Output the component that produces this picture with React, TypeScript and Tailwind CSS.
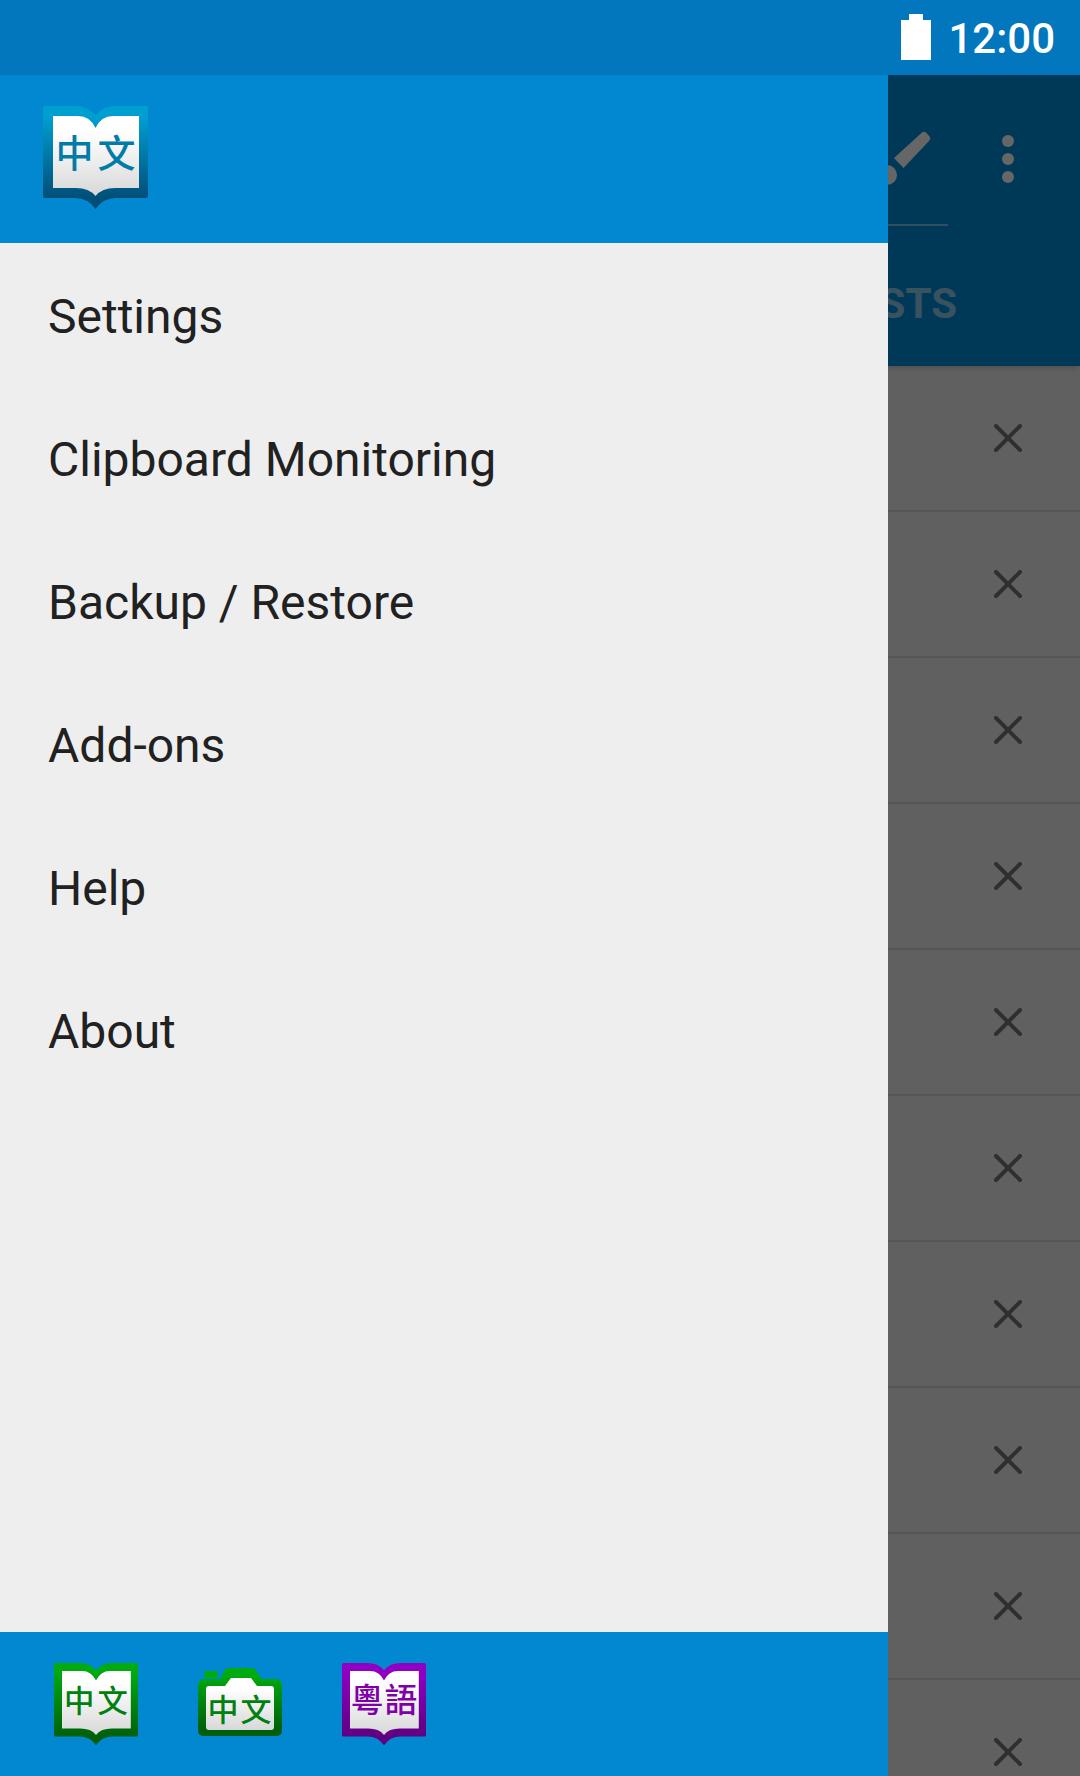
const menuItems = ["Settings", "Clipboard Monitoring", "Backup / Restore", "Add-ons", "Help", "About"];
const rows = Array.from({ length: 10 }, (_, i) => i);

type Tone = { id: string; top: string; bottom: string; text: string };

const blue: Tone = { id: "logoBlue", top: "#009fd2", bottom: "#004e78", text: "#017ca8" };
const green: Tone = { id: "logoGreen", top: "#00ab12", bottom: "#005f0a", text: "#008010" };
const purple: Tone = { id: "logoPurple", top: "#9000c4", bottom: "#5f0080", text: "#8000a8" };

function Gradients({ tone }: { tone: Tone }) {
  return (
    <defs>
      <linearGradient id={tone.id} x1="0" y1="0" x2="0" y2="1">
        <stop offset="0.1" stopColor={tone.top} />
        <stop offset="0.9" stopColor={tone.bottom} />
      </linearGradient>
      <linearGradient id={tone.id + "Page"} x1="0" y1="0" x2="0" y2="1">
        <stop offset="0.2" stopColor="#ffffff" />
        <stop offset="1" stopColor="#d8d8d8" />
      </linearGradient>
    </defs>
  );
}

function BookLogo({ tone, size, chars = "中文", textSize = 38 }: { tone: Tone; size: number; chars?: string; textSize?: number }) {
  return (
    <svg width={size} height={(size * 103) / 105} viewBox="0 0 105 103">
      <Gradients tone={tone} />
      <path
        d="M2 0H32Q45 0 52.5 9Q60 0 73 0H103Q105 0 105 2V90Q105 92 103 92H73Q60 92 52.5 103Q45 92 32 92H2Q0 92 0 90V2Q0 0 2 0Z"
        fill={`url(#${tone.id})`}
      />
      <path
        d="M10 10H35Q47 10 52.5 22Q58 10 70 10H96V82H72Q59 82 52.5 90Q46 82 33 82H10Z"
        fill={`url(#${tone.id}Page)`}
      />
      <text
        x="31.500"
        y="61"
        fontSize={textSize}
        fontWeight="500"
        textAnchor="middle"
        fill={tone.text}
        className="[font-family:'Noto_Sans_CJK_TC',sans-serif]"
      >
        {chars[0]}
      </text>
      <text
        x="73.500"
        y="61"
        fontSize={textSize}
        fontWeight="500"
        textAnchor="middle"
        fill={tone.text}
        className="[font-family:'Noto_Sans_CJK_TC',sans-serif]"
      >
        {chars[1]}
      </text>
    </svg>
  );
}

function CameraLogo({ tone, size }: { tone: Tone; size: number }) {
  return (
    <svg width={size} height={(size * 83) / 84} viewBox="0 0 84 83">
      <Gradients tone={tone} />
      <rect x="6" y="8" width="14" height="7" rx="2" fill={tone.top} />
      <path
        d="M6 16H22L28 5H56L64 16H78Q84 16 84 22V67Q84 73 78 73H6Q0 73 0 67V22Q0 16 6 16Z"
        fill={`url(#${tone.id})`}
      />
      <path
        d="M11 23H27L33 15H53L59 23H73Q76 23 76 26V64Q76 67 73 67H11Q8 67 8 64V26Q8 23 11 23Z"
        fill={`url(#${tone.id}Page)`}
      />
      <text x="25" y="58" fontSize="31" fontWeight="500" textAnchor="middle" fill={tone.text} className="[font-family:'Noto_Sans_CJK_TC',sans-serif]">
        中
      </text>
      <text x="58" y="58" fontSize="31" fontWeight="500" textAnchor="middle" fill={tone.text} className="[font-family:'Noto_Sans_CJK_TC',sans-serif]">
        文
      </text>
    </svg>
  );
}

function BatteryIcon() {
  return (
    <svg width="30" height="46" viewBox="0 0 30 46" className="shrink-0">
      <path d="M8 0H22V6H30V46H0V6H8Z" fill="#ffffff" />
    </svg>
  );
}

function PenIcon() {
  return (
    <svg width="64" height="64" viewBox="0 0 64 64" className="shrink-0">
      <circle cx="13" cy="49" r="10" fill="#ffffff" />
      <path d="M20 32L48 6.500Q50 5 52 6.500L56 11Q57 13 55 15L29.500 42Z" fill="#ffffff" />
    </svg>
  );
}

function MoreIcon() {
  return (
    <svg width="12" height="48" viewBox="0 0 12 48" className="shrink-0">
      <circle cx="6" cy="6" r="6" fill="#ffffff" />
      <circle cx="6" cy="24" r="6" fill="#ffffff" />
      <circle cx="6" cy="42" r="6" fill="#ffffff" />
    </svg>
  );
}

function CloseIcon() {
  return (
    <svg width="28" height="28" viewBox="0 0 28 28" className="shrink-0">
      <path d="M2 2L26 26M26 2L2 26" stroke="#757575" strokeWidth="4" strokeLinecap="round" />
    </svg>
  );
}

export default function App() {
  return (
    <div className="flex h-[1776px] w-[1080px] flex-col overflow-hidden bg-[#f0f0f0] [font-family:Roboto,sans-serif]">
      <div className="flex h-[75px] shrink-0 items-center justify-end bg-[#0277bd] pr-[25px]">
        <div className="mr-[17px] mt-[-2px] flex">
          <BatteryIcon />
        </div>
        <span className="mt-[3px] text-[42px] font-medium leading-none text-white">12:00</span>
      </div>

      <div className="relative flex-1 overflow-hidden">
        <div className="relative z-0 flex h-[291px] flex-col bg-[#028ddb] shadow-md">
          <div className="flex h-[149px] items-center justify-end pr-[66px] pt-[19px]">
            <div className="mr-[64px] mt-[-2px]">
              <PenIcon />
            </div>
            <MoreIcon />
          </div>
          <div className="ml-[16px] mr-[132px] h-[2px] bg-white/50" />
          <div className="flex flex-1 items-center justify-end pr-[123px] pt-[15px]">
            <span className="text-[42px] font-bold leading-none text-white/55">LISTS</span>
          </div>
        </div>

        {rows.map((row) => (
          <div key={row} className="flex h-[146px] items-center justify-end border-b-2 border-[#d8d8d8] pr-[58px]">
            <CloseIcon />
          </div>
        ))}

        <div className="absolute inset-0 bg-black/60" />

        <div className="absolute inset-y-0 left-0 flex w-[888px] flex-col bg-[#eeeeee]">
          <div className="flex h-[168px] shrink-0 items-start bg-[#0288d1] pl-[43px] pt-[31px]">
            <BookLogo tone={blue} size={105} />
          </div>
          <div className="flex flex-1 flex-col pt-[2px]">
            {menuItems.map((item) => (
              <div key={item} className="flex h-[143px] items-center pl-[48px] text-[48px] leading-none text-[#212121]">
                {item}
              </div>
            ))}
          </div>
          <div className="flex h-[144px] shrink-0 items-center bg-[#0288d1] pl-[24px]">
            <div className="flex w-[144px] justify-center">
              <BookLogo tone={green} size={84} />
            </div>
            <div className="flex w-[144px] justify-center">
              <CameraLogo tone={green} size={84} />
            </div>
            <div className="flex w-[144px] justify-center">
              <BookLogo tone={purple} size={84} chars="粵語" textSize={41} />
            </div>
          </div>
        </div>
      </div>
    </div>
  );
}
